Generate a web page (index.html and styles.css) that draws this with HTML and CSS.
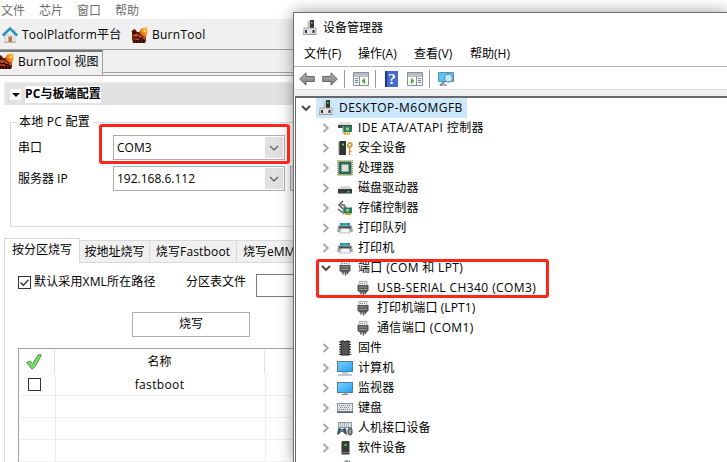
FILE: index.html
```
<!DOCTYPE html>
<html lang="zh-CN">
<head>
<meta charset="utf-8">
<title>设备管理器</title>
<link rel="stylesheet" href="styles.css">
</head>
<body>
<svg class="defs" width="0" height="0">
  <defs>
    <linearGradient id="sky" x1="0" y1="0" x2="1" y2="1"><stop offset="0" stop-color="#7fd0ff"/><stop offset="1" stop-color="#1fa5f5"/></linearGradient>
    <linearGradient id="flame" x1="0" y1="1" x2="1" y2="0"><stop offset="0" stop-color="#b8320a"/><stop offset=".5" stop-color="#f28c1c"/><stop offset="1" stop-color="#ffc84a"/></linearGradient>
    <linearGradient id="metal" x1="0" y1="0" x2="0" y2="1"><stop offset="0" stop-color="#b8b8b8"/><stop offset="1" stop-color="#777"/></linearGradient>
  </defs>
  <symbol id="home" viewBox="0 0 16 16"><path d="M3 8h10v7H3z" fill="#e6e8ea" stroke="#b5babd" stroke-width=".6"/><path d="M11.5 1.500h2V5h-2z" fill="#d8d8d8"/><path d="M.8 8.500 8 1.500l7.200 7" fill="none" stroke="#2b93b8" stroke-width="2.500"/><path d="M6.500 9.500h3.500v5.500H6.500z" fill="#b9733d"/><path d="M2 15.300h12" stroke="#aaa" stroke-width="1"/></symbol>
  <symbol id="burn" viewBox="0 0 17 16"><path d="M1 4l2-2 2 1 1 2 3 0 3 1 3 3v5l-1 2H2l-1-4z" fill="#6b1c08"/><path d="M8 5l2-3.500L14 .5h2.500V6L15 10l-4-1z" fill="url(#flame)"/><path d="M2 8l3-1 3 1 3 2 4 0-1 3-4-1-3 1-4-1z" fill="#cf5218"/><path d="M1 4l2 2 2-1M3 10l2 1 2-1 2 2 3-1M3 13v3M6 13v3M9 13v3M12.500 12v4" stroke="#210a05" stroke-width="1.500" fill="none"/><circle cx="13.500" cy="4" r="1" fill="#ffe9a0"/></symbol>
  <symbol id="tick" viewBox="0 0 16 16"><path d="M.7 8.500l3.300-1.500 2.500 3L12 .8h3.500L9.500 12 6 15.300z" fill="#7ddb68" stroke="#4a9b4c" stroke-width="1"/></symbol>
  <symbol id="pc" viewBox="0 0 16 16"><path d="M7 1l2-1h3v9H7z" fill="#333"/><path d="M9 2h1.500v1.500H9z" fill="#3f3"/><path d="M5.500 1.500 8 0v8H5.500z" fill="#c5c5c5"/><path d="M2 8h12v6.500H1.500z" fill="#e1e1e1" stroke="#999" stroke-width=".8"/><path d="M3 10h2v3H3zM10.500 10h2v3h-2z" fill="#333"/><path d="M1 14.500h13.500" stroke="#999"/></symbol>
  <symbol id="ide" viewBox="0 0 16 16"><path d="M3 2h10l2 3H1z" fill="#dedede"/><path d="M1 5h14v3H1z" fill="#444"/><path d="M6 6h9v6H6z" fill="#247d55"/><path d="M9 7.500h3v3H9z" fill="#9ac8ad"/><path d="M6 6v8" stroke="#9aa" /><path d="M7 13.500h6" stroke="#d4a019" stroke-width="2.500" stroke-dasharray="2 .5"/></symbol>
  <symbol id="security" viewBox="0 0 16 16"><path d="M2 2l1-1h6v14H2z" fill="#333"/><path d="M5 3.500h2v2H5z" fill="#3e3"/><path d="M2 2v12" stroke="#888"/><circle cx="12.800" cy="5" r="2" fill="none" stroke="#d09a3e" stroke-width="1.800"/><path d="M12.500 7v8M12.500 11.500h2" stroke="#d09a3e" stroke-width="1.500"/></symbol>
  <symbol id="cpu" viewBox="0 0 16 16"><rect x=".7" y=".7" width="14.600" height="14.600" fill="none" stroke="#a99742" stroke-width="1.400" stroke-dasharray="1 1"/><rect x="1.500" y="1.500" width="13" height="13" fill="#2d6b50"/><path d="M4.500 4.500h7v7h-7z" fill="#d9e2de"/></symbol>
  <symbol id="disk" viewBox="0 0 16 16"><path d="M4 6h8l3 3H1z" fill="#d6d6d6"/><path d="M1 9h14v4.500H1z" fill="#3a3a3a"/><path d="M10.500 11h2v1.500h-2z" fill="#3d6"/></symbol>
  <symbol id="storage" viewBox="0 0 16 16"><path d="M6 1 2 5l4 4 3-3M4 5h4M1 9l5 4" fill="none" stroke="#555" stroke-width="1.500"/><path d="M6 7.500h9v6H6z" fill="#247d55"/><path d="M9 9h3v2.500H9z" fill="#9ac8ad"/><path d="M6 6.500v8" stroke="#9aa"/><path d="M8 14.300h6" stroke="#d4a019" stroke-width="1.600"/></symbol>
  <symbol id="printer" viewBox="0 0 16 16"><path d="M3 3h10v3H3z" fill="#2884dc"/><path d="M6 3h4v3H6z" fill="#23bd62"/><path d="M1 5.500h14l1 6.500H0z" fill="#a2a8ad"/><path d="M2 6.500h12v2H2z" fill="#41484e"/><path d="M4 8.500h8l1.500 4.500h-11z" fill="#f4f4f4" stroke="#999" stroke-width=".6"/></symbol>
  <symbol id="plug" viewBox="0 0 16 16"><path d="M4 1.500h8V6H4z" fill="#eee" stroke="#999" stroke-width=".8"/><path d="M5 3.500h6" stroke="#777" stroke-dasharray="1 1"/><path d="M2.500 5h11v5.500l-2 2h-7l-2-2z" fill="#555"/><path d="M4 7h8M4 9.500h8" stroke="#aaa" stroke-width=".8"/><path d="M6 12v2.500M8.500 12v3.500M10.500 12v2" stroke="#555" stroke-width="1.500" fill="none"/></symbol>
  <symbol id="chip" viewBox="0 0 16 16"><path d="M2 2h12M2 4.500h12M2 7h12M2 9.500h12M2 12h12M2 14.500h12" stroke="#333" stroke-width="1.200"/><path d="M4 1h3l1 1 1-1h3v14H4z" fill="#555" stroke="#222"/></symbol>
  <symbol id="computer" viewBox="0 0 16 16"><rect x=".5" y="1.500" width="15" height="10" fill="url(#sky)" stroke="#4f7d9a"/><path d="M5 13h6" stroke="#999"/><path d="M1 15h14" stroke="#8da8bb" stroke-width="1.200"/></symbol>
  <symbol id="monitor" viewBox="0 0 16 16"><rect x=".5" y="2.500" width="15" height="10" fill="url(#sky)" stroke="#4f7d9a"/><path d="M7 13h2v1.500H5h6" stroke="#888" fill="none"/></symbol>
  <symbol id="keyboard" viewBox="0 0 16 16"><rect x=".5" y="3.500" width="15" height="8" fill="#e1e4e6" stroke="#8b969e"/><path d="M2 5.500h12M3 7.500h10M2 9.500h12" stroke="#7b858c" stroke-dasharray="1 1"/><path d="M0 12.200h16" stroke="#596168" stroke-width="1.500"/></symbol>
  <symbol id="hid" viewBox="0 0 16 16"><rect x="1.500" y="2.500" width="13" height="5" fill="#e1e4e6" stroke="#8b969e"/><path d="M3 4h10M3 6h10" stroke="#7b858c" stroke-dasharray="1 1"/><path d="M0 15l1-6q2-2 3 0h2q2-2 3 0l1 6-2-1-2-2H4l-2 2z" fill="#3e4e5a"/><path d="M3 9.500h3v2H3z" fill="#319fde"/><path d="M5 11h2" stroke="#e35634"/><rect x="11" y="8" width="4" height="7" rx="2" fill="#8d969d" stroke="#444"/></symbol>
  <symbol id="software" viewBox="0 0 16 16"><path d="M4.500 2l1-1h7v13.500h-8z" fill="#3b3b3b"/><path d="M4.500 2v12" stroke="#999"/><path d="M7.500 4h2v2h-2z" fill="#3e3"/><path d="M5 12.500h7" stroke="#777"/></symbol>
  <symbol id="sound" viewBox="0 0 16 16"><path d="M4 4l5-4h2v14l-6-4z" fill="#999"/><path d="M12 1q3 4 0 12" stroke="#4a90d9" fill="none" stroke-width="1.500"/></symbol>
  <symbol id="back" viewBox="0 0 16 14"><path d="M.7 7 7 .8v3.700h8.300v5H7v3.700z" fill="url(#metal)" stroke="#666"/></symbol>
  <symbol id="pane" viewBox="0 0 16 14"><path d="M.5.500h15v13H.5z" fill="#f7f7f7" stroke="#888f96"/><path d="M1 2h14" stroke="#b8bec4" stroke-width="2"/><path d="M1 4h14M6.500 4v10" stroke="#888f96"/><path d="M2 6.500h3M2 8.500h3M2 10.500h3" stroke="#5680a6"/><path d="M12 6v6L8.500 9z" fill="#43ae36"/></symbol>
  <symbol id="help" viewBox="0 0 13 16"><rect width="13" height="16" fill="#4468d2"/><path d="M0 0h2v16H0z" fill="#20358c"/></symbol>
  <symbol id="scan" viewBox="0 0 16 16"><path d="M.5 1.500h15v9H.5z" fill="#5cc5f5" stroke="#4c93b9"/><path d="M2 14h7" stroke="#888" stroke-width="1.300"/><circle cx="10.500" cy="7" r="4" fill="#bfeaff" stroke="#7298ae" stroke-width="1.300"/><path d="M7.500 10 2 14.500" stroke="#7595aa" stroke-width="2"/></symbol>
  <symbol id="right" viewBox="0 0 10 10"><path d="M2.500 1 6.800 5 2.500 9" fill="none" stroke="#a6a6a6" stroke-width="1.800"/></symbol>
  <symbol id="down" viewBox="0 0 10 10"><path d="M1 3 5 7 9 3" fill="none" stroke="#404040" stroke-width="1.900"/></symbol>
  <symbol id="drop" viewBox="0 0 10 10"><path d="M1 3 5 7 9 3" fill="none" stroke="#555" stroke-width="1.100"/></symbol>
</svg>

<main class="app">
  <nav class="menu"><span>文件</span><span>芯片</span><span>窗口</span><span>帮助</span></nav>
  <div class="toolbar">
    <svg class="i16"><use href="#home"/></svg><span class="platform">ToolPlatform平台</span>
    <svg class="i17"><use href="#burn"/></svg><span class="burntool">BurnTool</span>
  </div>
  <div class="views"><div class="view"><svg class="i17"><use href="#burn"/></svg><span>BurnTool 视图</span></div><div class="views-rest"></div></div>
  <div class="editor">
    <header class="section"><svg class="twist" viewBox="0 0 11 11"><path d="M2 4h8L6 8z" fill="#111"/></svg><b>PC与板端配置</b></header>
    <fieldset class="config">
      <legend>本地 PC 配置</legend>
      <div class="field"><label>串口</label><div class="combo"><span>COM3</span><i><svg class="i10"><use href="#drop"/></svg></i></div></div>
      <div class="field"><label>服务器 IP</label><div class="combo"><span>192.168.6.112</span><i><svg class="i10"><use href="#drop"/></svg></i></div><div class="side-button"></div></div>
    </fieldset>
    <div class="tabs"><div class="tab on">按分区烧写</div><div class="tab t2">按地址烧写</div><div class="tab t3">烧写Fastboot</div><div class="tab t4">烧写eMMC</div></div>
    <div class="page">
      <div class="options"><span class="check"><svg viewBox="0 0 11 11"><path d="M1.500 5.500 4.300 8.300 9.500 2.700" fill="none" stroke="#333" stroke-width="1.300"/></svg></span><span class="xml">默认采用XML所在路径</span><span class="file">分区表文件</span><span class="input"></span></div>
      <div class="button">烧写</div>
      <div class="table">
        <div class="row head"><div><svg class="i16"><use href="#tick"/></svg></div><div>名称</div><div></div></div>
        <div class="row"><div><span class="check"></span></div><div class="fast">fastboot</div><div></div></div>
        <div class="row"><div></div><div></div><div></div></div>
        <div class="row"><div></div><div></div><div></div></div>
        <div class="row"><div></div><div></div><div></div></div>
      </div>
    </div>
  </div>
</main>

<section class="window">
  <div class="title"><svg class="i16"><use href="#pc"/></svg><span>设备管理器</span></div>
  <nav class="winmenu"><span>文件(F)</span><span>操作(A)</span><span>查看(V)</span><span>帮助(H)</span></nav>
  <div class="wintools">
    <svg class="arrow"><use href="#back"/></svg><svg class="arrow flip fwd"><use href="#back"/></svg><i class="sep s1"></i>
    <svg class="pane p1"><use href="#pane"/></svg><i class="sep s2"></i>
    <span class="help"><svg><use href="#help"/></svg><b>?</b></span><svg class="pane p2 flip"><use href="#pane"/></svg><i class="sep s3"></i>
    <svg class="scan"><use href="#scan"/></svg>
  </div>
  <div class="band"></div>
  <div class="tree">
    <div class="node root"><svg class="chev"><use href="#down"/></svg><div class="selected"><svg class="i16"><use href="#pc"/></svg><span class="desk">DESKTOP-M6OMGFB</span></div></div>
    <div class="node"><svg class="chev"><use href="#right"/></svg><svg class="i16"><use href="#ide"/></svg><span>IDE ATA/ATAPI 控制器</span></div>
    <div class="node"><svg class="chev"><use href="#right"/></svg><svg class="i16"><use href="#security"/></svg><span>安全设备</span></div>
    <div class="node"><svg class="chev"><use href="#right"/></svg><svg class="i16"><use href="#cpu"/></svg><span>处理器</span></div>
    <div class="node"><svg class="chev"><use href="#right"/></svg><svg class="i16"><use href="#disk"/></svg><span>磁盘驱动器</span></div>
    <div class="node"><svg class="chev"><use href="#right"/></svg><svg class="i16"><use href="#storage"/></svg><span>存储控制器</span></div>
    <div class="node"><svg class="chev"><use href="#right"/></svg><svg class="i16"><use href="#printer"/></svg><span>打印队列</span></div>
    <div class="node"><svg class="chev"><use href="#right"/></svg><svg class="i16"><use href="#printer"/></svg><span>打印机</span></div>
    <div class="node"><svg class="chev"><use href="#down"/></svg><svg class="i16"><use href="#plug"/></svg><span class="latin">端口 (COM 和 LPT)</span></div>
    <div class="node leaf"><svg class="i16"><use href="#plug"/></svg><span class="usb">USB-SERIAL CH340 (COM3)</span></div>
    <div class="node leaf"><svg class="i16"><use href="#plug"/></svg><span>打印机端口 (LPT1)</span></div>
    <div class="node leaf"><svg class="i16"><use href="#plug"/></svg><span class="latin">通信端口 (COM1)</span></div>
    <div class="node"><svg class="chev"><use href="#right"/></svg><svg class="i16"><use href="#chip"/></svg><span>固件</span></div>
    <div class="node"><svg class="chev"><use href="#right"/></svg><svg class="i16"><use href="#computer"/></svg><span>计算机</span></div>
    <div class="node"><svg class="chev"><use href="#right"/></svg><svg class="i16"><use href="#monitor"/></svg><span>监视器</span></div>
    <div class="node"><svg class="chev"><use href="#right"/></svg><svg class="i16"><use href="#keyboard"/></svg><span>键盘</span></div>
    <div class="node"><svg class="chev"><use href="#right"/></svg><svg class="i16"><use href="#hid"/></svg><span>人机接口设备</span></div>
    <div class="node"><svg class="chev"><use href="#right"/></svg><svg class="i16"><use href="#software"/></svg><span>软件设备</span></div>
    <div class="node cut"><svg class="chev"></svg><svg class="i16"><use href="#sound"/></svg></div>
  </div>
</section>
<div class="mark mark-port"></div>
<div class="mark mark-tree"></div>
</body>
</html>
```
FILE: styles.css
```
* { box-sizing: border-box; }
html, body { margin: 0; width: 727px; height: 462px; overflow: hidden; }
body { position: relative; background: #fff; color: #000; font: 12px/16px "Open Sans", "Noto Sans CJK SC", sans-serif; white-space: nowrap; }
svg { display: block; flex: none; overflow: hidden; }
span { display: block; }
i { font-style: normal; }
.defs { position: absolute; }
.i16 { width: 16px; height: 16px; }
.i17 { width: 17px; height: 16px; }
.i10 { width: 10px; height: 10px; }

.app { width: 727px; height: 462px; overflow: hidden; }
.menu { height: 19px; display: flex; gap: 14px; padding: 3px 1px 0; color: #6d6d6d; }
.toolbar { height: 30px; display: flex; align-items: center; padding: 1px 0 0 2px; background: #f0f0f0; }
.platform { margin-left: 4px; width: 109px; letter-spacing: .2px; }
.burntool { margin-left: 4px; letter-spacing: .25px; }
.views { height: 27px; display: flex; border-top: 1px solid #a0a0a0; border-bottom: 1px solid #a0a0a0; background: #f0f0f0; }
.view { width: 103px; height: 25px; display: flex; align-items: flex-start; border-top: 2px solid #777; border-right: 1px solid #a0a0a0; }
.view svg { margin: 1px 0 0 -3px; }
.view span { margin: 2px 0 0 4px; letter-spacing: .2px; }
.views-rest { flex: 1; height: 23px; border-bottom: 1px solid #a0a0a0; }
.editor { height: 386px; padding: 6px 0 0 4px; overflow: hidden; }
.section { height: 23px; display: flex; align-items: center; border: 1px solid #ececec; border-width: 1px 0 0 2px; background: #e2e2e2; padding-left: 4px; }
.section svg { width: 11px; height: 11px; background: #fff; }
.section b { margin-left: 4px; height: 17px; background: #fff; letter-spacing: .1px; }
.config { margin: 9px 0 0 6px; height: 113px; width: 400px; border: 1px solid #dcdcdc; padding: 5px 0 0 7px; }
.config legend { padding: 0 3px 0 2px; margin-left: -1px; line-height: 16px; letter-spacing: .25px; }
.field { display: flex; height: 25px; margin-bottom: 6px; line-height: 25px; }
.field label { width: 95px; }
.combo { width: 172px; border: 1px solid #adadad; padding: 1px; display: flex; justify-content: space-between; line-height: 21px; }
.combo span { padding-left: 2px; }
.combo i { width: 18px; background: #e1e1e1; display: flex; align-items: center; justify-content: center; }
.side-button { width: 80px; margin-left: 5px; border: 1px solid #adadad; background: #e8e8e8; }
.tabs { display: flex; align-items: flex-start; height: 25px; margin-top: 11px; }
.tab { height: 23px; margin-top: 2px; line-height: 21px; background: #f0f0f0; border: 1px solid #d9d9d9; border-left: 0; text-align: center; }
.tab.on { width: 76px; height: 25px; margin-top: 0; background: #fff; border-left: 1px solid #d9d9d9; border-bottom: 0; }
.t2 { width: 70px; }
.t3 { width: 87px; letter-spacing: .15px; }
.t4 { width: 85px; text-align: left; padding-left: 6px; }
.page { border-left: 1px solid #d9d9d9; height: 199px; padding: 11px 0 0 13px; overflow: hidden; }
.options { display: flex; align-items: flex-start; height: 23px; }
.check { width: 13px; height: 13px; border: 1px solid #333; background: #fff; }
.check svg { width: 11px; height: 11px; }
.options .check { margin-top: 2px; }
.xml { margin-left: 3px; width: 152px; letter-spacing: .15px; }
.file { width: 70px; }
.input { width: 160px; height: 23px; border: 1px solid #7a7a7a; }
.button { width: 118px; height: 25px; margin: 15px 0 0 114px; border: 1px solid #adadad; line-height: 22px; text-align: center; }
.table { width: 420px; margin-top: 11px; border: 1px solid #a0a0a6; border-width: 1px 0 0 1px; padding: 1px 0 0 1px; }
.row { display: grid; grid-template-columns: 36px 210px 1fr; height: 22px; }
.row > div { display: flex; align-items: center; justify-content: center; border-right: 1px solid #ededed; border-bottom: 1px solid #ededed; }
.row .check { margin-right: 6px; }
.row .fast { letter-spacing: .35px; padding-right: 2px; }
.row.head { grid-template-columns: 35px 210px 1fr; height: 24px; }
.row.head > div { border-bottom: 0; border-color: #e2e2e2; }
.row.head svg { margin-right: 6px; }

.window { position: absolute; left: 293px; top: 12px; width: 434px; height: 450px; overflow: hidden; background: #fff; border: 1px solid #6e6e6e; border-width: 1px 0 0 1px; box-shadow: 0 0 14px rgba(0, 0, 0, .4); }
.title { height: 32px; display: flex; align-items: center; padding: 0 0 3px 8px; }
.title span { margin-left: 5px; }
.winmenu { display: flex; gap: 16px; height: 22px; border-bottom: 1px solid #b4b4b4; padding: 1px 0 0 10px; }
.winmenu span { width: 40px; }
.winmenu span:first-child { width: 38px; }
.wintools { height: 22px; display: flex; align-items: center; padding: 2px 0 0 5px; }
.arrow { width: 16px; height: 14px; }
.flip { transform: scaleX(-1); }
.fwd { margin-left: 7px; }
.sep { width: 1px; height: 18px; background: #999; }
.s1 { margin-left: 6px; }
.p1 { margin-left: 8px; }
.s2 { margin-left: 6px; }
.pane { width: 16px; height: 14px; }
.help { display: grid; margin-left: 9px; width: 13px; height: 16px; }
.help > * { grid-area: 1 / 1; width: 13px; height: 16px; }
.help b { color: #fff; padding-left: 1px; text-align: center; font: bold 15px/16px "Liberation Serif", serif; }
.p2 { margin-left: 9px; }
.s3 { margin-left: 6px; }
.scan { width: 16px; height: 16px; margin-left: 8px; }
.band { height: 7px; background: #f0f0f0; border-top: 1px solid #dcdcdc; }
.tree { margin-left: 1px; border: 1px solid #696969; border-width: 2px 0 0 1px; padding-left: 25px; height: 366px; overflow: hidden; }
.node { display: flex; align-items: center; height: 20px; }
.node span { margin-left: 5px; }
.chev { width: 10px; height: 10px; margin-right: 6px; }
.node.root { margin-left: -20px; }
.root .chev { margin-right: 5px; }
.selected { height: 20px; width: 151px; padding-left: 2px; display: flex; align-items: center; background: #cce8ff; }
.leaf { padding-left: 34px; }
.leaf span { margin-left: 6px; }
.desk { letter-spacing: .47px; }
.node span:not(.desk):not(.usb) { letter-spacing: .1px; }
.node:nth-child(2) span:not(.desk) { letter-spacing: .38px !important; }
.usb { letter-spacing: .42px; }
.node .latin:not(.desk):not(.usb) { letter-spacing: .35px; }

.mark { position: absolute; border: 3px solid #ff2617; border-radius: 3px; }
.mark-port { left: 99px; top: 124px; width: 191px; height: 40px; }
.mark-tree { left: 316px; top: 259px; width: 233px; height: 39px; }
```
